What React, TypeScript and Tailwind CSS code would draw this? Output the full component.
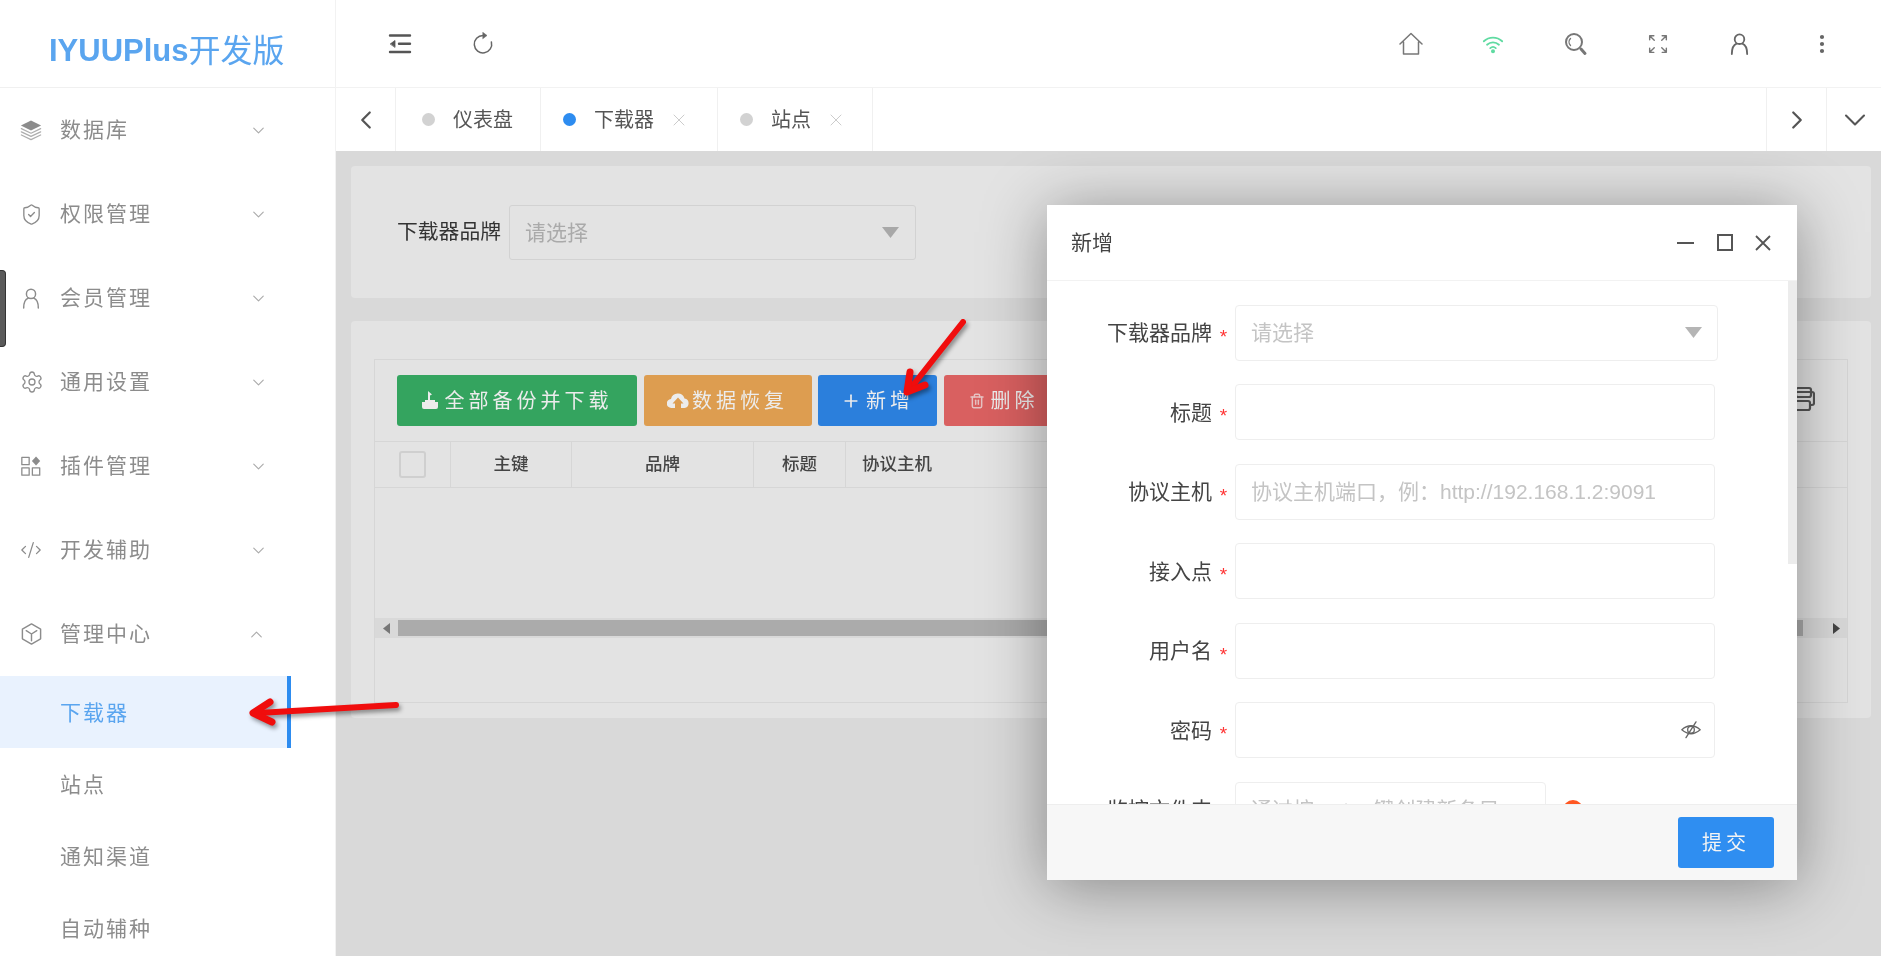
import React from "react";
import { ChevronDown, ChevronUp, ChevronLeft, ChevronRight, ShieldCheck, Settings, CodeXml, X, Plus, EllipsisVertical, Trash2 } from "lucide-react";

const Svg = ({ w = 24, h = 24, vb = "0 0 24 24", sw = 1.5, className = "", children }: any) => (
  <svg width={w} height={h} viewBox={vb} fill="none" stroke="currentColor" strokeWidth={sw} strokeLinecap="round" strokeLinejoin="round" className={className}>
    {children}
  </svg>
);

const LayersIcon = () => (
  <Svg w={22} h={24}>
    <path d="M12 1.500 23 7 12 12.500 1 7Z" fill="currentColor" stroke="none" />
    <path d="M1.500 10.500 12 15.500 22.500 10.500M1.500 14 12 19 22.500 14M1.500 17.500 12 22.500 22.500 17.500" strokeWidth={1.4} opacity={0.7} />
  </Svg>
);
const UserIcon = ({ s = 22, sw = 1.6 }: any) => (
  <Svg w={s} h={s} sw={sw}>
    <circle cx="12" cy="7.500" r="5" />
    <path d="M4 23c0-5 1.500-9.500 5-10.800M20 23c0-5-1.500-9.500-5-10.800" />
  </Svg>
);
const AppsIcon = () => (
  <Svg w={22} h={22} sw={1.4}>
    <rect x="2" y="2.500" width="8" height="8" />
    <rect x="2" y="14" width="8" height="8" />
    <rect x="13.500" y="14" width="8" height="8" />
    <path d="M17.500 1.500 22 6.500 17.500 11.500 13 6.500Z" fill="currentColor" stroke="none" />
  </Svg>
);
const CubeIcon = () => (
  <Svg w={23} h={24} sw={1.5}>
    <path d="M12 1.500 21.500 7V17L12 22.500 2.500 17V7Z" />
    <path d="M6.500 8.500 12 12 17.500 8.500M12 12V19" />
  </Svg>
);

const menus = [
  { name: "数据库", icon: <LayersIcon /> },
  { name: "权限管理", icon: <ShieldCheck size={23} strokeWidth={1.4} /> },
  { name: "会员管理", icon: <UserIcon /> },
  { name: "通用设置", icon: <Settings size={24} strokeWidth={1.3} /> },
  { name: "插件管理", icon: <AppsIcon /> },
  { name: "开发辅助", icon: <CodeXml size={22} strokeWidth={1.4} /> },
];

const MenuItem = ({ name, icon, open }: any) => (
  <div className="flex h-[84px] w-[291px] shrink-0 items-center pl-[20px] text-[#8c8c8c]">
    <span className="flex w-[40px] shrink-0 items-center">{icon}</span>
    <span className="flex-1 text-[21px] tracking-[2px]">{name}</span>
    {open ? <ChevronUp size={19} strokeWidth={1.4} className="mr-[25px] text-[#aaa]" /> : <ChevronDown size={19} strokeWidth={1.4} className="mr-[23px] text-[#aaa]" />}
  </div>
);

const subClass = "flex h-[72px] w-[291px] shrink-0 items-center pl-[60px] pt-[2px] text-[21px] tracking-[2px]";

const Sidebar = () => (
  <aside className="flex h-full w-[336px] shrink-0 flex-col border-r border-[#f2f2f2] bg-white">
    <div className="flex h-[88px] shrink-0 items-center border-b border-[#f0f0f0] pl-[49px] pt-[15px] text-[31px] font-bold text-[#5aa5ef]">
      IYUUPlus<span className="text-[32px] font-normal">开发版</span>
    </div>
    {menus.map((m) => (
      <MenuItem key={m.name} {...m} />
    ))}
    <MenuItem name="管理中心" icon={<CubeIcon />} open />
    <div className={`${subClass} border-r-[4px] border-[#2d8cf0] bg-[#e9f2fe] text-[#5aa5ef]`}>下载器</div>
    <div className={`${subClass} text-[#8c8c8c]`}>站点</div>
    <div className={`${subClass} text-[#8c8c8c]`}>通知渠道</div>
    <div className={`${subClass} text-[#8c8c8c]`}>自动辅种</div>
  </aside>
);

const TopBar = () => (
  <header className="flex h-[88px] shrink-0 items-center justify-between border-b border-[#f2f2f2] bg-white">
    <div className="flex items-center pl-[52px] text-[#555]">
      <Svg w={24} h={24} sw={2.4} vb="0 0 24 24">
        <path d="M2 3.500H22M11 11.800H22M2 20H22" />
        <path d="M2.500 11.800 7 8.500V15Z" fill="currentColor" strokeWidth={0.8} />
      </Svg>
      <span className="ml-[59px] text-[#666]">
        <Svg w={24} h={24} sw={1.5}>
          <path d="M12 3.500A8.700 8.700 0 1 0 20.400 10" />
          <path d="M12 .5 16 3.500 12 6.500Z" fill="currentColor" strokeWidth={0.6} />
        </Svg>
      </span>
    </div>
    <div className="flex items-center pr-[47px] text-[#777]">
      <Svg w={24} h={24} sw={1.5}>
        <path d="M1 12 12 1.500 23 12M4.500 10V22H19.500V10" />
      </Svg>
      <span className="ml-[59px] text-[#60dba2]">
        <Svg w={22} h={22} sw={2}>
          <path d="M2 9a14.500 14.500 0 0 1 20 0M5.500 12.800a9.500 9.500 0 0 1 13 0M9 16.500a4.500 4.500 0 0 1 6 0" />
          <circle cx="12" cy="20" r="1.200" fill="currentColor" />
        </Svg>
      </span>
      <span className="ml-[60px]">
        <Svg w={24} h={24} sw={2}>
          <circle cx="10" cy="10" r="8" />
          <path d="M6.500 6.500a5 5 0 0 0 0 7" strokeWidth={1.4} />
          <path d="M17 17l4 4.500" strokeWidth={3} />
        </Svg>
      </span>
      <span className="ml-[60px]">
        <Svg w={20} h={20} sw={1.7}>
          <path d="M2 7V2H7M2 2 7.500 7.500M22 7V2H17M22 2 16.500 7.500M2 17V22H7M2 22 7.500 16.500M22 17V22H17M22 22 16.500 16.500" />
        </Svg>
      </span>
      <span className="ml-[60px] text-[#666]">
        <UserIcon s={23} sw={1.9} />
      </span>
      <EllipsisVertical size={24} strokeWidth={2.2} className="ml-[59px] text-[#666]" />
    </div>
  </header>
);

const Tab = ({ label, dot, w, close, pl }: any) => (
  <div style={{ width: w, paddingLeft: pl }} className="flex h-full shrink-0 items-center border-r border-[#f0f0f0]">
    <span style={{ background: dot }} className="h-[13px] w-[13px] rounded-full"></span>
    <span className="ml-[18px] text-[20px] text-[#555]">{label}</span>
    {close && <X size={20} strokeWidth={1.2} className="ml-[15px] text-[#ccc]" />}
  </div>
);

const TabBar = () => (
  <div className="flex h-[63px] shrink-0 items-center bg-white text-[#555]">
    <div className="flex h-full w-[60px] shrink-0 items-center justify-center border-r border-[#f0f0f0]">
      <ChevronLeft size={30} strokeWidth={1.8} />
    </div>
    <Tab label="仪表盘" dot="#d2d2d2" w={145} pl={26} />
    <Tab label="下载器" dot="#2d8cf0" w={177} pl={22} close />
    <Tab label="站点" dot="#d2d2d2" w={155} pl={22} close />
    <div className="flex-1"></div>
    <div className="flex h-full w-[60px] shrink-0 items-center justify-center border-l border-[#f0f0f0]">
      <ChevronRight size={30} strokeWidth={1.8} />
    </div>
    <div className="flex h-full w-[55px] shrink-0 items-center justify-center border-l border-[#f0f0f0] pl-[1px]">
      <ChevronDown size={36} strokeWidth={1.4} />
    </div>
  </div>
);

const Caret = ({ c }: any) => (
  <svg width="17" height="11" viewBox="0 0 17 11" className={c}>
    <path d="M0 0H17L8.500 11Z" fill="currentColor" />
  </svg>
);

const Btn = ({ bg, w, icon, label }: any) => (
  <div style={{ background: bg, width: w }} className="flex h-[51px] shrink-0 items-center justify-center gap-[3px] rounded-[3px] text-[20px] tracking-[4px] text-[#ececec]">
    {icon}
    <span>{label}</span>
  </div>
);

const Th = ({ w, children }: any) => (
  <div style={{ width: w }} className="flex h-full shrink-0 items-center justify-center border-r border-[#d6d6d6] text-[17.500px] font-medium text-[#444]">
    {children}
  </div>
);

const Content = () => (
  <main className="relative flex-1 overflow-hidden bg-[#d9d9d9] pl-[15px] pr-[10px] pt-[15px]">
    <section className="flex h-[132px] items-center rounded-[4px] bg-[#e3e3e3] pl-[46px]">
      <span className="w-[112px] text-[20.800px] text-[#333]">下载器品牌</span>
      <div className="flex h-[55px] w-[407px] items-center justify-between rounded-[3px] border border-[#d2d2d2] pl-[15px] pr-[16px] text-[21px] text-[#aaa]">
        <span className="pt-[2px]">请选择</span>
        <Caret c="text-[#a8a8a8]" />
      </div>
    </section>
    <section className="mt-[23px] h-[397px] rounded-[4px] bg-[#e3e3e3] px-[23px] pt-[38px]">
      <div className="flex h-[344px] flex-col border border-[#d6d6d6]">
        <div className="flex h-[82px] shrink-0 items-start justify-between border-b border-[#d6d6d6] pl-[22px] pr-[32px] pt-[15px]">
          <div className="flex gap-[6.500px]">
            <Btn bg="#34a45f" w={240} label="全部备份并下载" icon={
              <svg width="16" height="19" viewBox="0 0 16 19" className="mr-[4px]"><path d="M6 0 10 3.500 8 4.500V9H13V11H16V16Q16 18 14 18H2Q0 18 0 16V11H3V9H6Z" fill="#ececec" /></svg>
            } />
            <Btn bg="#dd9d50" w={168} label="数据恢复" icon={
              <svg width="22" height="18" viewBox="0 0 22 18"><path d="M5 16H4.500A4.500 4.500 0 0 1 4 7 7 7 0 0 1 17.500 6.500 4.800 4.800 0 0 1 17.500 16H14V11.500H16.500L11 5.500 5.500 11.500H8V16Z" fill="#ececec" /></svg>
            } />
            <Btn bg="#2b7fdc" w={119} label="新增" icon={<Plus size={20} strokeWidth={2} className="mr-[2px]" />} />
            <Btn bg="#d96060" w={120} label="删除" icon={<Trash2 size={16} strokeWidth={2.2} className="mr-[3px] opacity-70" />} />
          </div>
          <div className="mt-[11px] text-[#555]">
            <svg width="22" height="26" viewBox="0 0 22 26" fill="none" stroke="currentColor" strokeWidth="2.2">
              <rect x="3" y="2" width="15" height="9" rx="2" />
              <path d="M1 6H19Q21 6 21 8V17Q21 19 19 19H17" />
              <rect x="1" y="15" width="16" height="9" rx="2" />
            </svg>
          </div>
        </div>
        <div className="flex h-[46px] shrink-0 items-center border-b border-[#d6d6d6]">
          <Th w={76}>
            <span className="h-[27px] w-[27px] rounded-[3px] border-2 border-[#cfcfcf]"></span>
          </Th>
          <Th w={121}>主键</Th>
          <Th w={182}>品牌</Th>
          <Th w={92}>标题</Th>
          <div className="flex flex-1 items-center justify-between pl-[16px] pr-[44px] text-[17.500px] font-medium text-[#444]">
            协议主机
            <EllipsisVertical size={17} strokeWidth={2.5} className="text-[#666]" />
          </div>
        </div>
        <div className="flex-1"></div>
        <div className="flex h-[20px] shrink-0 items-center bg-[#d9d9d9]">
          <div className="flex h-full w-[23px] items-center justify-center">
            <svg width="7" height="11" viewBox="0 0 7 11"><path d="M7 0V11L0 5.500Z" fill="#777" /></svg>
          </div>
          <div className="h-[16px] w-[1405px] bg-[#ababab]"></div>
          <div className="flex h-full flex-1 items-center justify-center pl-[22px]">
            <svg width="7" height="11" viewBox="0 0 7 11"><path d="M0 0V11L7 5.500Z" fill="#444" /></svg>
          </div>
        </div>
        <div className="h-[64px] shrink-0"></div>
      </div>
    </section>
    <Modal />
  </main>
);

const Row = ({ label, children }: any) => (
  <div className="flex h-[56px] shrink-0 items-center">
    <label className="w-[165px] shrink-0 pt-[1px] text-right text-[21px] text-[#444]">{label}</label>
    <span className="w-[23px] shrink-0 pt-[7px] text-center text-[19px] leading-none text-[#f33]">*</span>
    {children}
  </div>
);

const Input = ({ ph, children, w = "w-[480px]" }: any) => (
  <div className={`flex h-full items-center rounded-[4px] border border-[#eee] pl-[15px] pr-[11px] text-[21px] text-[#c4c4c4] ${w}`}>
    {ph && <span className="pt-[1px]">{ph}</span>}
    <span className="ml-auto flex items-center">{children}</span>
  </div>
);

const Modal = () => (
  <div className="absolute left-[711px] top-[54px] flex h-[675px] w-[750px] flex-col bg-white shadow-[0_6px_60px_rgba(0,0,0,0.38)]">
    <div className="flex h-[76px] shrink-0 items-center justify-between border-b border-[#f2f2f2] pl-[24px] pr-[26px] text-[21px] text-[#444]">
      新增
      <div className="flex items-center text-[#555]">
        <svg width="17" height="2" viewBox="0 0 17 2"><path d="M0 1H17" stroke="currentColor" strokeWidth="2" /></svg>
        <svg width="16" height="17" viewBox="0 0 16 17" className="ml-[23px]" fill="none"><rect x="1" y="1" width="14" height="15" stroke="currentColor" strokeWidth="2" /></svg>
        <svg width="16" height="16" viewBox="0 0 16 16" className="ml-[22px]" fill="none"><path d="M1 1 15 15M15 1 1 15" stroke="currentColor" strokeWidth="1.800" /></svg>
      </div>
    </div>
    <div className="relative flex flex-1 flex-col gap-[23.500px] overflow-hidden pt-[23.500px]">
      <div className="absolute right-0 top-0 h-[283px] w-[9px] bg-[#ececec]"></div>
      <Row label="下载器品牌">
        <Input ph="请选择" w="w-[483px]">
          <Caret c="mr-[4px] text-[#b5b5b5]" />
        </Input>
      </Row>
      <Row label="标题"><Input /></Row>
      <Row label="协议主机"><Input ph="协议主机端口，例：http://192.168.1.2:9091" /></Row>
      <Row label="接入点"><Input /></Row>
      <Row label="用户名"><Input /></Row>
      <Row label="密码">
        <Input>
          <span className="mt-[1px] text-[#666]">
            <Svg w={24} h={20} sw={1.6}>
              <path d="M1 10.500Q12 1 23 10.500 12 20 1 10.500Z" />
              <circle cx="12" cy="10.500" r="4" />
              <path d="M18 1 6 20" />
            </Svg>
          </span>
        </Input>
      </Row>
      <Row label="监控文件夹">
        <Input ph="通过按 enter 键创建新条目" w="w-[311px]" />
        <span className="ml-[17px] h-[20px] w-[20px] rounded-full bg-[#ff5722]"></span>
      </Row>
    </div>
    <div className="flex h-[76px] shrink-0 items-center justify-end border-t border-[#eee] bg-[#f7f7f7] pr-[23px]">
      <div className="flex h-[51px] w-[96px] items-center justify-center rounded-[3px] bg-[#2f8ef1] text-[20px] tracking-[4px] text-[#f4f4f4]">提交</div>
    </div>
  </div>
);

const Arrows = () => (
  <svg width="1881" height="956" viewBox="0 0 1881 956" fill="none" className="pointer-events-none absolute left-0 top-0 drop-shadow-[2px_3px_2px_rgba(0,0,0,0.4)]">
    <g stroke="#f00d0d" strokeLinecap="round" strokeLinejoin="round">
      <path d="M396 705 258 713" strokeWidth={6} />
      <path d="M270 702 253 713 272 722" strokeWidth={7} />
      <path d="M963 322 910 389" strokeWidth={6} />
      <path d="M910 372 907 392 925 385" strokeWidth={7} />
    </g>
  </svg>
);

export default function App() {
  return (
    <div className="relative flex h-[956px] w-full overflow-hidden bg-white font-['Liberation_Sans','Noto_Sans_CJK_SC',sans-serif] blur-[0.7px]">
      <Sidebar />
      <div className="flex min-w-0 flex-1 flex-col">
        <TopBar />
        <TabBar />
        <Content />
      </div>
      <div className="absolute left-0 top-[270px] h-[77px] w-[6px] rounded-r-[4px] border-y border-r border-[#333] bg-[#5a5a5a]"></div>
      <Arrows />
    </div>
  );
}
